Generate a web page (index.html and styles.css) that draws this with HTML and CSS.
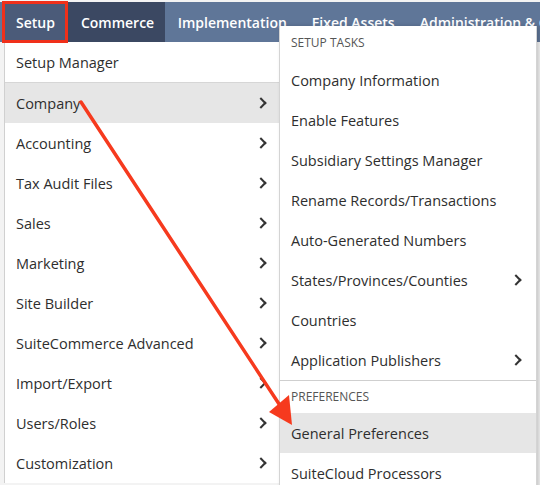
FILE: index.html
```html
<!DOCTYPE html>
<html lang="en">
  <head>
    <meta charset="UTF-8" />
    <meta name="viewport" content="width=device-width, initial-scale=1.0" />
    <title>Setup menu</title>
    <link rel="stylesheet" href="styles.css">
  </head>
  <body>
    <div class="navbar">
      <div class="tab tab-setup">Setup</div>
      <div class="tab tab-commerce">Commerce</div>
      <div class="tab">Implementation</div>
      <div class="tab">Fixed Assets</div>
      <div class="tab">Administration &amp; C</div>
    </div>

    <div class="menu">
      <div class="item first">Setup Manager</div>
      <div class="item active">Company <span class="chev"></span></div>
      <div class="item">Accounting <span class="chev"></span></div>
      <div class="item">Tax Audit Files <span class="chev"></span></div>
      <div class="item">Sales <span class="chev"></span></div>
      <div class="item">Marketing <span class="chev"></span></div>
      <div class="item">Site Builder <span class="chev"></span></div>
      <div class="item">SuiteCommerce Advanced <span class="chev"></span></div>
      <div class="item">Import/Export <span class="chev"></span></div>
      <div class="item">Users/Roles <span class="chev"></span></div>
      <div class="item">Customization <span class="chev"></span></div>
    </div>

    <div class="submenu">
      <div class="group">Setup Tasks</div>
      <div class="item">Company Information</div>
      <div class="item">Enable Features</div>
      <div class="item">Subsidiary Settings Manager</div>
      <div class="item">Rename Records/Transactions</div>
      <div class="item">Auto-Generated Numbers</div>
      <div class="item">States/Provinces/Counties <span class="chev"></span></div>
      <div class="item">Countries</div>
      <div class="item">Application Publishers <span class="chev"></span></div>
      <div class="group sep">Preferences</div>
      <div class="item active">General Preferences</div>
      <div class="item">SuiteCloud Processors</div>
    </div>

    <!-- annotations drawn over the screenshot -->
    <div class="highlight-box"></div>
    <svg class="arrow" width="540" height="485" viewBox="0 0 540 485">
      <line x1="81" y1="102" x2="281" y2="407" stroke="#f63a1e" stroke-width="3.5" stroke-linecap="round" />
      <polygon points="269,412 292,425 289,395" fill="#f63a1e" />
    </svg>
  </body>
</html>
```

FILE: styles.css
```css
/* page */
body {
  margin: 0;
  background-color: #f3f3f3;
  font-family: "Open Sans", "Liberation Sans", sans-serif;
  color: #2e2e2e;
  overflow: hidden;
  height: 485px;
  position: relative;
}

/* top navigation */
.navbar {
  margin-top: 2px;
  height: 40px;
  display: flex;
  background-color: #5f7698;
  white-space: nowrap;
  overflow: hidden;
}

.tab {
  flex-shrink: 0;
  padding: 0 12.5px;
  line-height: 41px;
  font-size: 14px;
  font-weight: 600;
  color: #fff;
}

.tab-setup {
  margin-left: 4px;
  padding: 0 12px;
  background-color: #4b5b79;
}

.tab-commerce {
  padding: 0 11px 0 14px;
  background-color: #3b4862;
}

/* first level menu */
.menu {
  margin-left: 4px;
  width: 264px;
  background-color: #fff;
  border-left: 1px solid #d0d0d0;
  padding-right: 11px;
}

.item {
  display: flex;
  align-items: center;
  justify-content: space-between;
  height: 40px;
  padding-left: 11px;
  font-size: 14.5px;
}

.menu .item {
  padding-right: 13px;
  margin-right: -11px;
}

.menu .first {
  border-bottom: 1px solid #d6d6d6;
}

.item.active {
  background-color: #e6e6e6;
}

.chev {
  width: 6px;
  height: 6px;
  border-right: 2.2px solid #333;
  border-top: 2.2px solid #333;
  transform: rotate(45deg);
  margin-right: 2px;
}

/* second level menu */
.submenu {
  position: absolute;
  left: 279px;
  top: 26px;
  width: 256px;
  background-color: #fff;
  border-left: 1px solid #d4d4d4;
  border-right: 1px solid #d4d4d4;
  box-shadow: 2px 0 4px rgba(0, 0, 0, 0.18);
}

.submenu .item {
  padding-right: 14px;
}

.group {
  height: 34px;
  line-height: 34px;
  padding-left: 11px;
  font-size: 12px;
  color: #555;
  text-transform: uppercase;
}

.group.sep {
  border-top: 1px solid #cfcfcf;
  height: 32px;
  line-height: 32px;
}

/* annotations */
.highlight-box {
  position: absolute;
  left: 2px;
  top: 1px;
  width: 60px;
  height: 36px;
  border: 3px solid #f0301a;
}

.arrow {
  position: absolute;
  left: 0;
  top: 0;
}
```
